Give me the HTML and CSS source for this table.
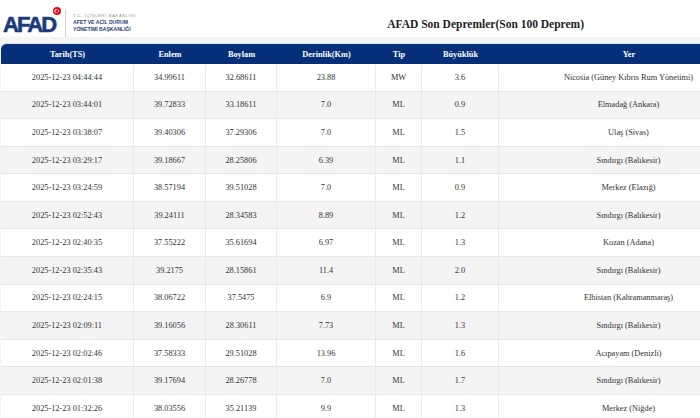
FILE: index.html
```html
<!DOCTYPE html>
<html lang="tr">
<head>
<meta charset="utf-8">
<title>AFAD Son Depremler</title>
<link rel="stylesheet" href="styles.css">
</head>
<body>
<header class="topbar">
  <div class="logo">
    <span class="logo-word">AFAD</span>
    <svg class="logo-flag" width="8" height="8" viewBox="0 0 8 8">
      <circle cx="4" cy="4" r="4" fill="#e30a17"/>
      <circle cx="3.4" cy="4" r="2" fill="#fff"/>
      <circle cx="3.9" cy="4" r="1.6" fill="#e30a17"/>
      <circle cx="5.6" cy="4" r="0.7" fill="#fff"/>
    </svg>
  </div>
  <div class="logo-sep"></div>
  <div class="logo-text">
    <span class="lt-top">T.C. İÇİŞLERİ BAKANLIĞI</span>
    <span class="lt-main">AFET VE ACİL DURUM</span>
    <span class="lt-main">YÖNETİMİ BAŞKANLIĞI</span>
  </div>
  <h1 class="title">AFAD Son Depremler(Son 100 Deprem)</h1>
</header>
<main class="table-wrap">
  <table class="quakes">
    <colgroup>
      <col class="c-date"><col class="c-lat"><col class="c-lon"><col class="c-depth"><col class="c-type"><col class="c-mag"><col class="c-loc">
    </colgroup>
    <thead>
      <tr><th>Tarih(TS)</th><th>Enlem</th><th>Boylam</th><th>Derinlik(Km)</th><th>Tip</th><th>Büyüklük</th><th>Yer</th></tr>
    </thead>
    <tbody>
      <tr><td>2025-12-23 04:44:44</td><td>34.99611</td><td>32.68611</td><td>23.88</td><td>MW</td><td>3.6</td><td>Nicosia (Güney Kıbrıs Rum Yönetimi)</td></tr>
      <tr><td>2025-12-23 03:44:01</td><td>39.72833</td><td>33.18611</td><td>7.0</td><td>ML</td><td>0.9</td><td>Elmadağ (Ankara)</td></tr>
      <tr><td>2025-12-23 03:38:07</td><td>39.40306</td><td>37.29306</td><td>7.0</td><td>ML</td><td>1.5</td><td>Ulaş (Sivas)</td></tr>
      <tr><td>2025-12-23 03:29:17</td><td>39.18667</td><td>28.25806</td><td>6.39</td><td>ML</td><td>1.1</td><td>Sındırgı (Balıkesir)</td></tr>
      <tr><td>2025-12-23 03:24:59</td><td>38.57194</td><td>39.51028</td><td>7.0</td><td>ML</td><td>0.9</td><td>Merkez (Elazığ)</td></tr>
      <tr><td>2025-12-23 02:52:43</td><td>39.24111</td><td>28.34583</td><td>8.89</td><td>ML</td><td>1.2</td><td>Sındırgı (Balıkesir)</td></tr>
      <tr><td>2025-12-23 02:40:35</td><td>37.55222</td><td>35.61694</td><td>6.97</td><td>ML</td><td>1.3</td><td>Kozan (Adana)</td></tr>
      <tr><td>2025-12-23 02:35:43</td><td>39.2175</td><td>28.15861</td><td>11.4</td><td>ML</td><td>2.0</td><td>Sındırgı (Balıkesir)</td></tr>
      <tr><td>2025-12-23 02:24:15</td><td>38.06722</td><td>37.5475</td><td>6.9</td><td>ML</td><td>1.2</td><td>Elbistan (Kahramanmaraş)</td></tr>
      <tr><td>2025-12-23 02:09:11</td><td>39.16056</td><td>28.30611</td><td>7.73</td><td>ML</td><td>1.3</td><td>Sındırgı (Balıkesir)</td></tr>
      <tr><td>2025-12-23 02:02:46</td><td>37.58333</td><td>29.51028</td><td>13.96</td><td>ML</td><td>1.6</td><td>Acıpayam (Denizli)</td></tr>
      <tr><td>2025-12-23 02:01:38</td><td>39.17694</td><td>28.26778</td><td>7.0</td><td>ML</td><td>1.7</td><td>Sındırgı (Balıkesir)</td></tr>
      <tr><td>2025-12-23 01:32:26</td><td>38.03556</td><td>35.21139</td><td>9.9</td><td>ML</td><td>1.3</td><td>Merkez (Niğde)</td></tr>
    </tbody>
  </table>
</main>
</body>
</html>
```
FILE: styles.css
```css
html, body {
  margin: 0;
  padding: 0;
}
body {
  background: #f4f4f4;
  font-family: "Liberation Serif", "Times New Roman", serif;
  color: #333;
  overflow: hidden;
  width: 700px;
  height: 418px;
}
.topbar {
  height: 37px;
  background: #fff;
  display: flex;
  align-items: center;
}
.logo {
  position: relative;
  margin-left: 3px;
  width: 60px;
  height: 37px;
  display: flex;
  align-items: center;
}
.logo-word {
  font-family: "Liberation Sans", Arial, sans-serif;
  font-weight: 700;
  font-size: 22px;
  letter-spacing: -1.9px;
  color: #1b3b7d;
  -webkit-text-stroke: 0.6px #1b3b7d;
  line-height: 1;
  margin-top: 13px;
}
.logo-flag {
  position: absolute;
  left: 50px;
  top: 7px;
}
.logo-sep {
  width: 1px;
  height: 28px;
  background: #d4d4d4;
  margin-left: 2px;
  margin-top: 8px;
}
.logo-text {
  display: flex;
  flex-direction: column;
  margin-left: 7px;
  margin-top: 8px;
  font-family: "Liberation Sans", Arial, sans-serif;
  line-height: 6.2px;
}
.lt-top {
  font-size: 4px;
  letter-spacing: 0.7px;
  color: #8a8a8a;
}
.lt-main {
  font-size: 5.1px;
  font-weight: 700;
  color: #27407c;
}
.title {
  margin: 0 0 0 251px;
  font-size: 11.5px;
  font-weight: 700;
  color: #1e1e1e;
  white-space: nowrap;
  padding-top: 10px;
}
.table-wrap {
  margin: 6px 0 0 1px;
  width: 699px;
  overflow: hidden;
}
.quakes {
  width: 758px;
  border-collapse: separate;
  border-spacing: 0;
  table-layout: fixed;
  font-size: 8.3px;
}
.c-date { width: 133px; }
.c-lat { width: 72px; }
.c-lon { width: 71px; }
.c-depth { width: 99px; }
.c-type { width: 46px; }
.c-mag { width: 77px; }
.c-loc { width: 260px; }
.quakes thead th {
  background: #062f79;
  color: #fff;
  font-weight: 700;
  height: 21px;
  padding: 0;
  text-align: center;
  border-top: 1px solid #dfe3ea;
  box-sizing: border-box;
}
.quakes thead th:first-child {
  border-top-left-radius: 6px;
}
.quakes tbody td {
  height: 27.58px;
  padding: 0;
  text-align: center;
  box-sizing: border-box;
  border-right: 1px solid #ebebeb;
  border-bottom: 1px solid #e6e6e6;
  white-space: nowrap;
  color: #333;
  background: #fff;
}
.quakes tbody tr:nth-child(even) td {
  background: #f4f4f4;
}
```
